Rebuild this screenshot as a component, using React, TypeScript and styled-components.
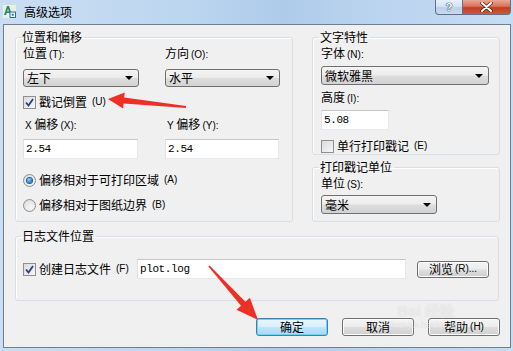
import React from 'react';
import styled, { createGlobalStyle, css } from 'styled-components';

const GlobalStyle = createGlobalStyle`
  html, body {
    margin: 0;
    padding: 0;
  }
  body {
    font-family: "Noto Sans CJK SC", "Noto Sans", sans-serif;
    font-size: 12px;
    color: #000;
  }
`;

const Window = styled.div`
  position: relative;
  width: 513px;
  height: 351px;
  box-sizing: border-box;
  display: flex;
  flex-direction: column;
  padding: 0 2px 3px 3px;
  background: linear-gradient(90deg, #c9def3 0%, #bdd6ef 35%, #aecbea 55%, #b9d2ee 70%, #c6dcf2 100%);
  overflow: hidden;
`;

const TitleBar = styled.div`
  height: 24px;
  flex: none;
  display: flex;
  align-items: flex-start;
`;

const AppIcon = styled.svg`
  margin: 5px 8px 0 0;
  flex: none;
`;

const TitleText = styled.span`
  margin-top: 4px;
  font-size: 12px;
  line-height: 16px;
  color: #000;
  flex: 1;
`;

const CaptionButton = styled.div<{ $close?: boolean }>`
  height: 15px;
  box-sizing: border-box;
  display: flex;
  align-items: center;
  justify-content: center;
  border: 1px solid #5f718a;
  border-top: none;
  ${(p) =>
    p.$close
      ? css`
          width: 48px;
          border-radius: 0 0 4px 0;
          border-left: none;
          background: linear-gradient(#e9a795 0%, #d8735c 45%, #c13c23 55%, #d0583c 100%);
        `
      : css`
          width: 28px;
          border-radius: 0 0 0 4px;
          background: linear-gradient(#e8f0fa 0%, #d6e3f3 45%, #bccfe7 55%, #c9daef 100%);
        `}
`;

const HelpGlyph = styled.span`
  font-family: "Liberation Sans", sans-serif;
  font-weight: bold;
  font-size: 11px;
  line-height: 11px;
  color: #fff;
  text-shadow: 0 0 1px #34465e, 0 0 1px #34465e, 0 0 1px #34465e;
`;

const Client = styled.div`
  flex: 1;
  display: flex;
  flex-direction: column;
  border: 1px solid #6f7f92;
  background: #f0f0f0;
  padding: 5px 10px 11px 11px;
`;

const TopSection = styled.div`
  display: flex;
  gap: 19px;
`;

const Column = styled.div`
  display: flex;
  flex-direction: column;
  gap: 5px;
`;

const Group = styled.fieldset<{ $w: number; $h: number; $mt?: number }>`
  box-sizing: border-box;
  width: ${(p) => p.$w}px;
  height: ${(p) => p.$h}px;
  margin: ${(p) => p.$mt ?? 0}px 0 0 0;
  padding: 0 0 0 ${(p) => (p.$w < 200 ? 8 : 7)}px;
  min-width: 0;
  border: 1px solid #d5dfe5;
  border-radius: 3px;
  box-shadow: inset 1px 1px 0 #fff;
`;

const Legend = styled.legend`
  padding: 0 2px 0 1px;
  margin-left: -2px;
  font-size: 12px;
  line-height: 14px;
`;

const Row = styled.div<{ $mt: number; $cols?: string }>`
  display: grid;
  grid-template-columns: ${(p) => p.$cols ?? '142px 1fr'};
  align-items: center;
  margin-top: ${(p) => p.$mt}px;
`;

const Label = styled.span`
  font-size: 12px;
  line-height: 14px;
  white-space: nowrap;
`;

const Key = styled.span`
  font-family: "Liberation Sans", sans-serif;
  font-size: 10px;
  margin-left: 2px;
`;

const Select = styled.div<{ $w: number; $h?: number }>`
  box-sizing: border-box;
  width: ${(p) => p.$w}px;
  height: ${(p) => p.$h ?? 18}px;
  display: flex;
  align-items: center;
  justify-content: space-between;
  padding: 0 5px 0 3px;
  border: 1px solid #707070;
  border-radius: 3px;
  background: linear-gradient(#f4f4f4 0%, #ececec 48%, #dedede 52%, #d2d2d2 100%);
  font-size: 12px;
  line-height: 14px;
`;

const Caret = styled.span`
  width: 0;
  height: 0;
  border-left: 4px solid transparent;
  border-right: 4px solid transparent;
  border-top: 4px solid #000;
`;

const TextBox = styled.div<{ $w: number }>`
  box-sizing: border-box;
  width: ${(p) => p.$w}px;
  height: 20px;
  display: flex;
  align-items: center;
  padding-left: 2px;
  background: #fff;
  border: 1px solid;
  border-color: #c4c6cc #e3e9ef #e3e9ef #dfe3e9;
  font-family: "Liberation Mono", monospace;
  font-size: 11px;
  letter-spacing: -0.4px;
`;

const CheckItem = styled.label`
  display: flex;
  align-items: center;
  gap: 3px;
  font-size: 12px;
  line-height: 14px;
  white-space: nowrap;
`;

const Box = styled.span`
  box-sizing: border-box;
  width: 13px;
  height: 13px;
  flex: none;
  display: flex;
  align-items: center;
  justify-content: center;
  border: 1px solid #8f8f8f;
  background: linear-gradient(135deg, #dcdcdc 0%, #f6f6f6 100%);
`;

const RadioDot = styled.span<{ $on?: boolean }>`
  box-sizing: border-box;
  width: 13px;
  height: 13px;
  flex: none;
  border-radius: 50%;
  border: 1px solid #8f8f8f;
  background: radial-gradient(circle at 60% 65%, #f8f8f8 0%, #d8d8d8 100%);
  display: flex;
  align-items: center;
  justify-content: center;
  &::after {
    content: '';
    width: 5px;
    height: 5px;
    border-radius: 50%;
    display: ${(p) => (p.$on ? 'block' : 'none')};
    background: radial-gradient(circle at 40% 35%, #a8dcfc 0%, #1a7fd4 60%, #0a4f9a 100%);
    box-shadow: 0 0 0 1px #1e5a9c;
  }
`;

const LogRow = styled.div`
  display: grid;
  grid-template-columns: 103px 269px 72px;
  column-gap: 11px;
  align-items: center;
  margin-top: 16px;
`;

const ButtonRow = styled.div`
  display: flex;
  justify-content: flex-end;
  gap: 14px;
  margin-top: 17px;
`;

const Button = styled.div<{ $w?: number; $h?: number; $default?: boolean }>`
  box-sizing: border-box;
  width: ${(p) => p.$w ?? 72}px;
  height: ${(p) => p.$h ?? 18}px;
  display: flex;
  align-items: center;
  justify-content: center;
  border: 1px solid #707070;
  border-radius: 3px;
  background: linear-gradient(#f4f4f4 0%, #ececec 48%, #dedede 52%, #d0d0d0 100%);
  box-shadow: inset 0 0 0 1px #fcfcfc;
  font-size: 12px;
  line-height: 14px;
  ${(p) =>
    p.$default &&
    css`
      border-color: #3c7fb1;
      background: linear-gradient(#eaf6fd 0%, #d9f0fc 48%, #bee6fd 52%, #a7d9f5 100%);
      box-shadow: inset 0 0 0 1px #6fd3f8;
    `}
`;

const Overlay = styled.svg`
  position: absolute;
  left: 0;
  top: 0;
  pointer-events: none;
`;

const Watermark = styled.div`
  position: absolute;
  left: 390px;
  top: 302px;
  display: flex;
  flex-direction: column;
  align-items: center;
  color: rgba(255, 255, 255, 0.55);
  font-family: "Liberation Sans", sans-serif;
  pointer-events: none;
  text-shadow: 0 0 1px rgba(150, 150, 150, 0.35);
`;

const MarkBig = styled.span`
  font-size: 15px;
  font-weight: bold;
  line-height: 18px;
`;

const MarkSmall = styled.span`
  font-size: 9px;
  line-height: 11px;
`;

const Check: React.FC<{ on?: boolean }> = ({ on }) => (
  <Box>
    {on && (
      <svg width="9" height="9" viewBox="0 0 9 9">
        <path d="M1 4.5 L3.5 7.5 L8 1" fill="none" stroke="#2a3f86" strokeWidth="1.8" />
      </svg>
    )}
  </Box>
);

const App: React.FC = () => {
  return (
    <>
      <GlobalStyle />
      <Window>
        <TitleBar>
          <AppIcon width="13" height="13" viewBox="0 0 13 13">
            <rect x="0" y="0" width="13" height="13" fill="#e7f1e4" />
            <path d="M1 10 L4 1 L6 1 L9 10 L7 10 L6.3 8 L3.7 8 L3 10 Z M4.2 6.4 L5.8 6.4 L5 3.6 Z" fill="#2d8a5b" />
            <rect x="7" y="7" width="5.5" height="5.5" fill="#fff" stroke="#2a6fb5" strokeWidth="1" />
            <rect x="8.7" y="8.7" width="2" height="2" fill="#2a6fb5" />
          </AppIcon>
          <TitleText>高级选项</TitleText>
          <CaptionButton>
            <HelpGlyph>?</HelpGlyph>
          </CaptionButton>
          <CaptionButton $close>
            <svg width="13" height="10" viewBox="0 0 13 10">
              <path d="M2 1 L11 9 M11 1 L2 9" stroke="#5a1b10" strokeWidth="3.4" strokeLinecap="round" />
              <path d="M2 1 L11 9 M11 1 L2 9" stroke="#fff" strokeWidth="2" strokeLinecap="round" />
            </svg>
          </CaptionButton>
        </TitleBar>

        <Client>
          <TopSection>
            <Group $w={279} $h={192}>
              <Legend>位置和偏移</Legend>
              <Row $mt={2}>
                <Label>位置<Key>(T):</Key></Label>
                <Label>方向<Key>(O):</Key></Label>
              </Row>
              <Row $mt={7}>
                <Select $w={116}>左下<Caret /></Select>
                <Select $w={115}>水平<Caret /></Select>
              </Row>
              <Row $mt={8}>
                <CheckItem>
                  <Check on />
                  戳记倒置<Key>(U)</Key>
                </CheckItem>
              </Row>
              <Row $mt={8}>
                <Label><Key>X</Key> 偏移<Key>(X):</Key></Label>
                <Label><Key>Y</Key> 偏移<Key>(Y):</Key></Label>
              </Row>
              <Row $mt={6}>
                <TextBox $w={115}>2.54</TextBox>
                <TextBox $w={114}>2.54</TextBox>
              </Row>
              <Row $mt={14} $cols="1fr">
                <CheckItem>
                  <RadioDot $on />
                  偏移相对于可打印区域<Key>(A)</Key>
                </CheckItem>
              </Row>
              <Row $mt={11} $cols="1fr">
                <CheckItem>
                  <RadioDot />
                  偏移相对于图纸边界<Key>(B)</Key>
                </CheckItem>
              </Row>
            </Group>

            <Column>
              <Group $w={188} $h={125}>
                <Legend>文字特性</Legend>
                <Row $mt={2} $cols="1fr">
                  <Label>字体<Key>(N):</Key></Label>
                </Row>
                <Row $mt={4} $cols="1fr">
                  <Select $w={168} $h={19}>微软雅黑<Caret /></Select>
                </Row>
                <Row $mt={5} $cols="1fr">
                  <Label>高度<Key>(I):</Key></Label>
                </Row>
                <Row $mt={4} $cols="1fr">
                  <TextBox $w={68}>5.08</TextBox>
                </Row>
                <Row $mt={9} $cols="1fr">
                  <CheckItem>
                    <Check />
                    单行打印戳记<Key>(E)</Key>
                  </CheckItem>
                </Row>
              </Group>
              <Group $w={188} $h={62}>
                <Legend>打印戳记单位</Legend>
                <Row $mt={2} $cols="1fr">
                  <Label>单位<Key>(S):</Key></Label>
                </Row>
                <Row $mt={3} $cols="1fr">
                  <Select $w={116} $h={19}>毫米<Caret /></Select>
                </Row>
              </Group>
            </Column>
          </TopSection>

          <Group $w={484} $h={72} $mt={7}>
            <Legend>日志文件位置</Legend>
            <LogRow>
              <CheckItem>
                <Check on />
                创建日志文件<Key>(F)</Key>
              </CheckItem>
              <TextBox $w={269}>plot.log</TextBox>
              <Button $h={17}>浏览<Key>(R)...</Key></Button>
            </LogRow>
          </Group>

          <ButtonRow>
            <Button $default>确定</Button>
            <Button>取消</Button>
            <Button>帮助<Key>(H)</Key></Button>
          </ButtonRow>
        </Client>

        <Watermark>
          <MarkBig>Bai 经验</MarkBig>
          <MarkSmall>jingyan.baidu.com</MarkSmall>
        </Watermark>

        <Overlay width="513" height="351" viewBox="0 0 513 351">
          <polygon
            points="108,99 124.7,92.6 124.2,97.6 186.1,106 185.9,108 123.6,103.6 123.1,108.6"
            fill="#ee2f26"
          />
          <polygon
            points="258,320 236.5,309.8 241,305.7 208.4,266.5 209.6,265.5 245.4,301.7 249.9,297.7"
            fill="#ee2f26"
          />
        </Overlay>
      </Window>
    </>
  );
};

export default App;
